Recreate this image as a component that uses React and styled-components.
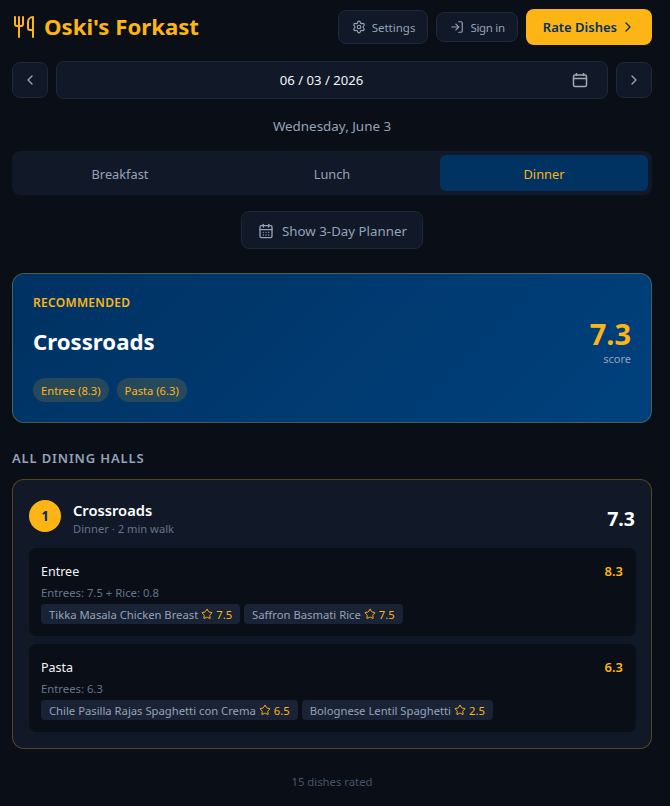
import React from "react";
import styled, { createGlobalStyle } from "styled-components";
import { Utensils, Settings, LogIn, ChevronLeft, ChevronRight, CalendarDays, Star } from "lucide-react";

const Global = createGlobalStyle`
  html, body { margin: 0; padding: 0; background: #0a0e17; }
  body { font-family: "Noto Sans", "Open Sans", sans-serif; color: #fff; }
  * { box-sizing: border-box; }
`;
const Page = styled.div`
  width: 670px; height: 806px; overflow: hidden; padding: 9px 18px 0 12px;
  display: flex; flex-direction: column; align-items: stretch;
`;
const Header = styled.header`
  display: flex; align-items: center; justify-content: space-between; height: 36px; margin-bottom: 16px;
`;
const Brand = styled.h1`
  margin: 0; display: flex; align-items: center; gap: 8px; color: #fdb515;
  font-size: 22.2px; font-weight: 700; line-height: 30px;
`;
const Actions = styled.div`display: flex; align-items: center; gap: 8px;`;
const GhostButton = styled.button`
  display: flex; align-items: center; gap: 6px; height: ${p => p.$h}px; padding: 0 12px 0 13px;
  background: #111827; border: 1px solid #1e293b; border-radius: 8px; color: #94a3b8;
  font: 400 11.5px "Noto Sans", sans-serif; letter-spacing: ${p => p.$track || 0}px;
`;
const RateButton = styled.button`
  display: flex; align-items: center; gap: 3px; height: 36px; padding: 0 16px 0 17px;
  background: #fdb515; border: 0; border-radius: 8px; color: #003262;
  font: 600 13px "Noto Sans", sans-serif;
`;
const DateRow = styled.div`display: flex; align-items: center; gap: 8px; height: 38px;`;
const NavButton = styled.button`
  width: 36px; height: 36px; flex: none; display: flex; align-items: center; justify-content: center;
  background: #111827; border: 1px solid #1e293b; border-radius: 8px; color: #94a3b8; padding: 0;
`;
const DateField = styled.div`
  flex: 1; height: 38px; display: flex; align-items: center; justify-content: center; position: relative;
  background: #111827; border: 1px solid #1e293b; border-radius: 8px; color: #f1f5f9;
  font-size: 13.1px; padding-right: 21px;
`;
const CalendarGlyph = styled.svg`position: absolute; right: 19px; top: 10px;`;
const DateLabel = styled.div`
  margin-top: 17px; height: 20px; line-height: 20px; text-align: center; font-size: 13.4px; color: #94a3b8;
`;
const Tabs = styled.div`
  margin-top: 15px; height: 44px; padding: 4px; display: grid; grid-template-columns: repeat(3, 1fr); gap: 4px;
  background: #111827; border-radius: 8px;
`;
const Tab = styled.div`
  display: flex; align-items: center; justify-content: center; border-radius: 6px; font-size: 12.8px; padding-top: 1px;
  color: ${p => (p.$active ? "#fdb515" : "#94a3b8")};
  background: ${p => (p.$active ? "#003262" : "transparent")};
`;
const PlannerWrap = styled.div`display: flex; justify-content: center; margin-top: 16px;`;
const PlannerButton = styled.button`
  height: 38px; padding: 1px 15px 0 16px; display: flex; align-items: center; gap: 8px;
  background: #111827; border: 1px solid #1e293b; border-radius: 8px; color: #94a3b8;
  font: 400 13.3px "Noto Sans", sans-serif;
`;
const Hero = styled.section`
  margin-top: 24px; height: 150px; padding: 20px; border-radius: 12px;
  border: 1px solid rgba(253, 181, 21, 0.3);
  background: linear-gradient(135deg, #003262 0%, #00417d 100%);
  display: flex; flex-direction: column;
`;
const Eyebrow = styled.div`
  color: #fdb515; font-size: 12px; font-weight: 600; letter-spacing: 0.3px; line-height: 18px;
`;
const HeroRow = styled.div`display: flex; justify-content: space-between; align-items: center; margin-top: 4px;`;
const HeroName = styled.div`font-size: 22.2px; font-weight: 700; line-height: 30px;`;
const Pills = styled.div`display: flex; gap: 8px; margin-top: 11px;`;
const Pill = styled.span`
  height: 24px; padding: 0 8px; display: flex; align-items: center; border-radius: 12px;
  background: rgba(253, 181, 21, 0.15); color: #fdb515; font-size: 11.2px;
`;
const HeroScore = styled.div`display: flex; flex-direction: column; align-items: flex-end;`;
const ScoreBig = styled.div`color: #fdb515; font-size: 29px; font-weight: 700; line-height: 35px;`;
const ScoreCaption = styled.div`color: #94a3b8; font-size: 11px; line-height: 16px;`;
const SectionTitle = styled.h2`
  margin: 25px 0 11px; font-size: 13px; font-weight: 600; line-height: 20px; letter-spacing: 0.85px; color: #94a3b8;
`;
const HallCard = styled.section`
  height: 270px; padding: 20px 15px 16px 16px; border-radius: 12px; background: #111827;
  border: 1px solid rgba(253, 181, 21, 0.3);
`;
const HallHead = styled.div`display: flex; align-items: center; gap: 12px; height: 32px; margin-bottom: 16px;`;
const Rank = styled.div`
  width: 32px; height: 32px; border-radius: 50%; background: #fdb515; color: #003262; flex: none;
  display: flex; align-items: center; justify-content: center; font-size: 13.5px; font-weight: 700;
`;
const HallInfo = styled.div`flex: 1; padding-top: 5px;`;
const HallName = styled.div`font-size: 14.7px; font-weight: 600; line-height: 19px; color: #fff;`;
const HallMeta = styled.div`font-size: 11.2px; line-height: 16px; color: #64748b; margin-top: 1px;`;
const HallScore = styled.div`font-size: 19.5px; font-weight: 700; color: #fff; padding: 4px 1px 0 0;`;
const Station = styled.div`
  height: 88px; padding: 13px 13px 12px 12px; border-radius: 8px; background: #0a0e17;
  & + & { margin-top: 8px; }
`;
const StationTop = styled.div`display: flex; justify-content: space-between; align-items: center; height: 20px;`;
const StationName = styled.div`font-size: 12.5px; color: #f1f5f9;`;
const StationScore = styled.div`font-size: 13px; font-weight: 600; color: #fdb515;`;
const Formula = styled.div`font-size: 11.3px; line-height: 16px; color: #64748b; margin-top: 4px;`;
const Dishes = styled.div`display: flex; gap: 4px; margin-top: 3px;`;
const Dish = styled.span`
  height: 20px; padding: 0 8px; display: flex; align-items: center; gap: 3px; border-radius: 4px;
  background: #1a2236; color: #94a3b8; font-size: 11.25px; white-space: nowrap;
`;
const DishRating = styled.span`color: #fdb515;`;
const Footer = styled.footer`
  margin-top: 24px; text-align: center; color: #475569; font-size: 11.3px; line-height: 18px;
`;

const halls = [
  { name: "Entree", score: "8.3", formula: "Entrees: 7.5 + Rice: 0.8", dishes: [["Tikka Masala Chicken Breast", "7.5"], ["Saffron Basmati Rice", "7.5"]] },
  { name: "Pasta", score: "6.3", formula: "Entrees: 6.3", dishes: [["Chile Pasilla Rajas Spaghetti con Crema", "6.5"], ["Bolognese Lentil Spaghetti", "2.5"]] },
];

export default function App() {
  return (
    <Page>
      <Global />
      <Header>
        <Brand><Utensils size={24} strokeWidth={2} />Oski's Forkast</Brand>
        <Actions>
          <GhostButton $h={34}><Settings size={14} />Settings</GhostButton>
          <GhostButton $h={30} $track={-0.3}><LogIn size={14} />Sign in</GhostButton>
          <RateButton>Rate Dishes<ChevronRight size={16} /></RateButton>
        </Actions>
      </Header>
      <DateRow>
        <NavButton><ChevronLeft size={16} /></NavButton>
        <DateField>
          06 / 03 / 2026
          <CalendarGlyph width="16" height="16" viewBox="0 0 16 16" fill="none" stroke="#a3a9b3" strokeWidth="1.5">
            <rect x="1.5" y="3" width="13" height="11.5" rx="1.5" />
            <path d="M1.5 6.5h13M4.5 1v3M11.5 1v3" />
          </CalendarGlyph>
        </DateField>
        <NavButton><ChevronRight size={16} /></NavButton>
      </DateRow>
      <DateLabel>Wednesday, June 3</DateLabel>
      <Tabs>
        <Tab>Breakfast</Tab>
        <Tab>Lunch</Tab>
        <Tab $active>Dinner</Tab>
      </Tabs>
      <PlannerWrap>
        <PlannerButton><CalendarDays size={16} />Show 3-Day Planner</PlannerButton>
      </PlannerWrap>
      <Hero>
        <Eyebrow>RECOMMENDED</Eyebrow>
        <HeroRow>
          <HeroName>Crossroads</HeroName>
          <HeroScore>
            <ScoreBig>7.3</ScoreBig>
            <ScoreCaption>score</ScoreCaption>
          </HeroScore>
        </HeroRow>
        <Pills><Pill>Entree (8.3)</Pill><Pill>Pasta (6.3)</Pill></Pills>
      </Hero>
      <SectionTitle>ALL DINING HALLS</SectionTitle>
      <HallCard>
        <HallHead>
          <Rank>1</Rank>
          <HallInfo>
            <HallName>Crossroads</HallName>
            <HallMeta>Dinner · 2 min walk</HallMeta>
          </HallInfo>
          <HallScore>7.3</HallScore>
        </HallHead>
        {halls.map(s => (
          <Station key={s.name}>
            <StationTop><StationName>{s.name}</StationName><StationScore>{s.score}</StationScore></StationTop>
            <Formula>{s.formula}</Formula>
            <Dishes>
              {s.dishes.map(([d, r]) => (
                <Dish key={d}>{d}<Star size={12} color="#fdb515" /><DishRating>{r}</DishRating></Dish>
              ))}
            </Dishes>
          </Station>
        ))}
      </HallCard>
      <Footer>15 dishes rated</Footer>
    </Page>
  );
}
